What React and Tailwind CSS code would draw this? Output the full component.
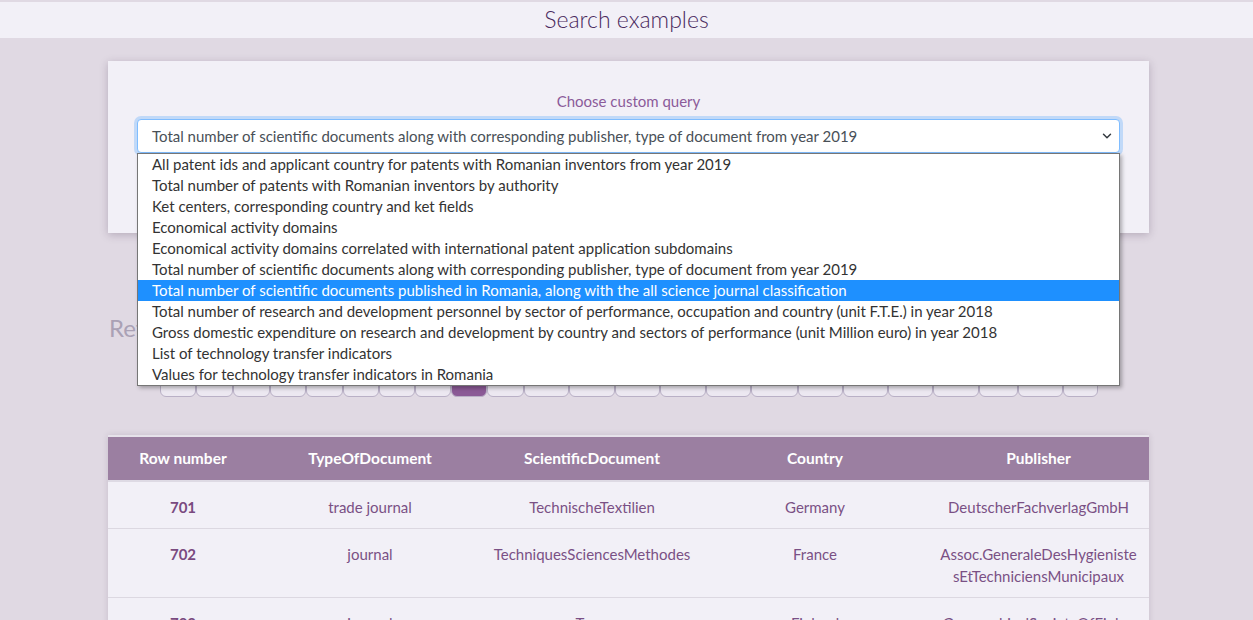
import { ChevronDown } from "lucide-react";

const queries = [
  "All patent ids and applicant country for patents with Romanian inventors from year 2019",
  "Total number of patents with Romanian inventors by authority",
  "Ket centers, corresponding country and ket fields",
  "Economical activity domains",
  "Economical activity domains correlated with international patent application subdomains",
  "Total number of scientific documents along with corresponding publisher, type of document from year 2019",
  "Total number of scientific documents published in Romania, along with the all science journal classification",
  "Total number of research and development personnel by sector of performance, occupation and country (unit F.T.E.) in year 2018",
  "Gross domestic expenditure on research and development by country and sectors of performance (unit Million euro) in year 2018",
  "List of technology transfer indicators",
  "Values for technology transfer indicators in Romania",
];

const pages = [
  { label: "‹", w: "w-[36px]" },
  { label: "1", w: "w-[37px]" },
  { label: "2", w: "w-[37px]" },
  { label: "3", w: "w-[36px]" },
  { label: "4", w: "w-[37px]" },
  { label: "5", w: "w-[36px]" },
  { label: "6", w: "w-[36px]" },
  { label: "7", w: "w-[36px]" },
  { label: "8", w: "w-[36px]", active: true },
  { label: "9", w: "w-[37px]" },
  { label: "10", w: "w-[45px]" },
  { label: "11", w: "w-[46px]" },
  { label: "12", w: "w-[45px]" },
  { label: "13", w: "w-[46px]" },
  { label: "14", w: "w-[45px]" },
  { label: "15", w: "w-[47px]" },
  { label: "16", w: "w-[45px]" },
  { label: "17", w: "w-[45px]" },
  { label: "18", w: "w-[45px]" },
  { label: "19", w: "w-[46px]" },
  { label: "…", w: "w-[39px]" },
  { label: "99", w: "w-[45px]" },
  { label: "›", w: "w-[35px]" },
];

const rows = [
  { n: 701, type: "trade journal", doc: "TechnischeTextilien", country: "Germany", pub: "DeutscherFachverlagGmbH" },
  { n: 702, type: "journal", doc: "TechniquesSciencesMethodes", country: "France", pub: "Assoc.GeneraleDesHygienistesEtTechniciensMunicipaux" },
  { n: 703, type: "journal", doc: "Terra", country: "Finland", pub: "GeographicalSocietyOfFinland" },
];

export default function App() {
  return (
    <div className="min-h-screen bg-[#e0d9e3] pt-[2px] font-['Lato',sans-serif]">
      {/* Header */}
      <div className="h-[36px] bg-[#f2f0f7] flex items-center justify-center">
        <h1 className="text-[23px] leading-[30px] font-light text-[#4a2a5e] -mt-[3px]">Search examples</h1>
      </div>

      <div className="w-[1041px] ml-[108px]">
        {/* Query card */}
        <div className="mt-[23px] bg-[#f2f0f7] shadow-[0_2px_8px_rgba(60,40,70,0.25)] pt-[30px] px-[29px] pb-[80px]">
          <div className="text-center text-[15px] leading-[20px] text-[#8b5b9a] mb-[8px]">Choose custom query</div>
          <div className="relative">
            <div className="h-[34px] bg-white border border-[#80bdff] rounded-[4px] shadow-[0_0_0_3px_rgba(0,123,255,0.2)] flex items-center justify-between pl-[14px] pr-[5px] text-[15px] text-[#495057]">
              <span>{queries[5]}</span>
              <ChevronDown size={14} strokeWidth={2.5} className="text-[#343a40]" />
            </div>
            <div className="absolute z-10 left-0 right-0 top-[34px] bg-white border border-[#767676] shadow-[2px_2px_4px_rgba(0,0,0,0.3)]">
              {queries.map((q, i) => (
                <div
                  key={q}
                  className={`h-[21px] leading-[21px] pl-[14px] text-[15px] whitespace-nowrap ${i === 6 ? "bg-[#1e90ff] text-white" : "text-[#333]"}`}
                >
                  {q}
                </div>
              ))}
            </div>
          </div>
        </div>

        {/* Results info */}
        <div className="mt-[82px] text-[24px] leading-[26px] text-[#aaa1b5] pl-[1px]">Returned results: 2000</div>

        <div className="mt-[22px] flex justify-center">
          {pages.map(p => (
            <div
              key={p.label}
              className={`${p.w} h-[34px] border border-[#b9b0c6] rounded-b-[6px] flex items-center justify-center text-[14px] ${p.active ? "bg-[#8b5a96] text-white border-[#8b5a96]" : "bg-[#ece8f1] text-[#8b5b9a]"}`}
            >
              {p.label}
            </div>
          ))}
        </div>

        {/* Table */}
        <table className="mt-[38px] w-full table-fixed border-collapse bg-[#f2f0f7] shadow-[0_0_6px_rgba(60,40,70,0.15)] border-t-2 border-[#e6e2ea]">
          <colgroup>
            <col className="w-[150px]" />
            <col className="w-[224px]" />
            <col className="w-[220px]" />
            <col className="w-[226px]" />
            <col className="w-[221px]" />
          </colgroup>
          <thead>
            <tr className="bg-[#9b7fa1] text-white text-[15.5px] font-bold">
              <th className="h-[45px] border-b-2 border-[#dedae4]">Row number</th>
              <th className="border-b-2 border-[#dedae4]">TypeOfDocument</th>
              <th className="border-b-2 border-[#dedae4]">ScientificDocument</th>
              <th className="border-b-2 border-[#dedae4]">Country</th>
              <th className="border-b-2 border-[#dedae4]">Publisher</th>
            </tr>
          </thead>
          <tbody className="text-[15px] leading-[22px] text-[#7a5085]">
            {rows.map(r => (
              <tr key={r.n} className="border-b border-[#dcd8e1] align-top text-center">
                <td className="pt-[14px] pb-[10px] font-bold text-[#7a4a80]">{r.n}</td>
                <td className="pt-[14px] pb-[10px]">{r.type}</td>
                <td className="pt-[14px] pb-[10px]">{r.doc}</td>
                <td className="pt-[14px] pb-[10px]">{r.country}</td>
                <td className="pt-[14px] pb-[10px] px-[12px] break-all">{r.pub}</td>
              </tr>
            ))}
          </tbody>
        </table>
      </div>
    </div>
  );
}
